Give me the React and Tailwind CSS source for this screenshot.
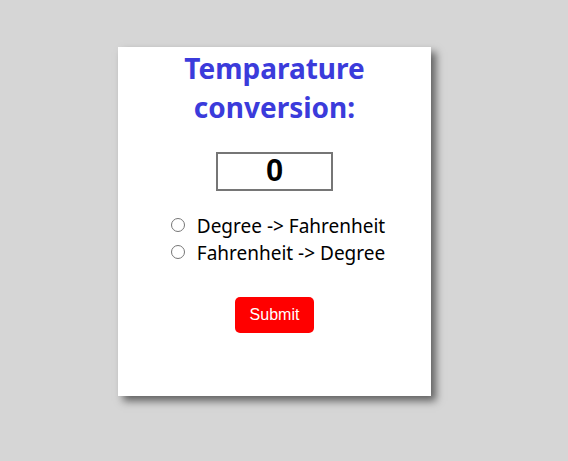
import React from "react";

export default function App() {
  return (
    <div className="min-h-[461px] w-full bg-[#d6d6d6] pt-[47px] pl-[118px]">
      <div className="flex h-[349px] w-[313px] flex-col items-center bg-white shadow-[5px_5px_8px_rgba(0,0,0,0.55)]">
        <h1 className="mt-[2px] text-center font-['Noto_Sans',sans-serif] text-[28px] leading-[39px] font-bold text-[#3b3bdb]">
          Temparature
          <br />
          conversion:
        </h1>
        <input
          type="text"
          defaultValue="0"
          className="mt-[25px] h-[39px] w-[117px] border-2 border-[#767676] text-center font-['Liberation_Sans',sans-serif] text-[31px] font-bold text-black outline-none"
        />
        <div className="mt-[22px] flex flex-col pl-[7px] font-['Noto_Sans',sans-serif] text-[19px] leading-[27px] text-black">
          <label className="flex items-center">
            <input type="radio" name="conv" className="mr-[12px] mb-[4px] h-[14px] w-[14px]" />
            Degree -&gt; Fahrenheit
          </label>
          <label className="flex items-center">
            <input type="radio" name="conv" className="mr-[12px] mb-[4px] h-[14px] w-[14px]" />
            Fahrenheit -&gt; Degree
          </label>
        </div>
        <button className="mt-[30px] h-[36px] w-[79px] rounded-[5px] bg-[#ff0000] font-['Liberation_Sans',sans-serif] text-[16px] text-white">
          Submit
        </button>
      </div>
    </div>
  );
}
